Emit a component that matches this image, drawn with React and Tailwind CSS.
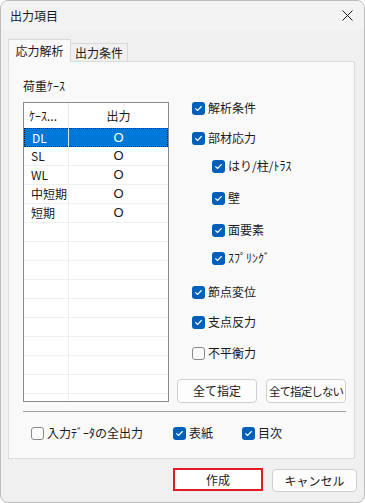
import React from "react";

const Check = ({ checked }) =>
  checked ? (
    <span className="flex h-[13px] w-[13px] shrink-0 items-center justify-center rounded-[3px] bg-[#005fb8]">
      <svg width="9" height="9" viewBox="0 0 9 9" fill="none">
        <path d="M1.6 4.7 L3.5 6.5 L7.4 2.5" stroke="#fff" strokeWidth="1.1" strokeLinecap="round" strokeLinejoin="round" />
      </svg>
    </span>
  ) : (
    <span className="h-[13px] w-[13px] shrink-0 rounded-[3px] border border-[#8a8a8a] bg-[#fbfbfb]" />
  );

const CheckRow = ({ label, checked = true, className = "" }) => (
  <div className={`flex h-[16px] items-center gap-[3px] ${className}`}>
    <Check checked={checked} />
    <span className="whitespace-nowrap leading-[16px]">{label}</span>
  </div>
);

// margins between rows taken from the screenshot
const options = [
  { label: "解析条件", cls: "ml-[15px]" },
  { label: "部材応力", cls: "ml-[15px] mt-[14px]" },
  { label: "はり/柱/ﾄﾗｽ", cls: "ml-[35px] mt-[12px]" },
  { label: "壁", cls: "ml-[35px] mt-[16px]" },
  { label: "面要素", cls: "ml-[35px] mt-[16px]" },
  { label: "ｽﾌﾟﾘﾝｸﾞ", cls: "ml-[35px] mt-[12px]" },
  { label: "節点変位", cls: "ml-[15px] mt-[18px]" },
  { label: "支点反力", cls: "ml-[15px] mt-[14px]" },
  { label: "不平衡力", cls: "ml-[15px] mt-[15px]", checked: false },
];

const loadCases = ["DL", "SL", "WL", "中短期", "短期"];

const App = () => {
  const emptyRows = Array.from({ length: 10 });

  return (
    <div className="h-[503px] w-[365px] overflow-hidden rounded-[8px] border border-[#bcbcbc] bg-[#f0f0f0] font-['Noto_Sans_CJK_JP',sans-serif] text-[12px] text-[#1a1a1a]">
      {/* title bar */}
      <div className="flex h-[29px] items-center justify-between bg-[#f3f3f3] pl-[9px] pr-[10px]">
        <span className="leading-[16px]">出力項目</span>
        <svg width="11" height="11" viewBox="0 0 11 11" className="mr-[1px]">
          <path d="M0.5 0.5 L10.5 10.5 M10.5 0.5 L0.5 10.5" stroke="#1a1a1a" strokeWidth="1" />
        </svg>
      </div>

      {/* tabs */}
      <div className="flex h-[31px] items-end pl-[7px]">
        <div className="relative z-10 -mb-px flex h-[23px] w-[63px] items-start justify-center border border-b-0 border-[#d9d9d9] bg-[#f9f9f9] pt-[3px]">
          <span className="leading-[16px]">応力解析</span>
        </div>
        <div className="flex h-[18px] w-[57px] items-start justify-center border border-b-0 border-l-0 border-[#d9d9d9] bg-[#f0f0f0] pt-[1px]">
          <span className="leading-[16px]">出力条件</span>
        </div>
      </div>

      {/* tab panel */}
      <div className="ml-[7px] flex h-[398px] w-[347px] flex-col border border-[#dcdcdc] bg-[#f9f9f9] pl-[14px] pr-[8px] pt-[16px]">
        <div className="flex">
          <div className="flex flex-col">
            <div className="h-[16px] leading-[16px]">荷重ｹｰｽ</div>
            <div className="mt-[8px] flex h-[300px] w-[146px] flex-col overflow-hidden border border-[#868a91] bg-white">
              <div className="flex h-[25px] shrink-0">
                <div className="flex w-[45px] items-center border-r border-[#e8e8e8] pl-[5px]">ｹｰｽ...</div>
                <div className="flex flex-1 items-center justify-center">出力</div>
              </div>
              {loadCases.map((name, i) => (
                <div
                  key={name}
                  className={
                    i === 0
                      ? "flex h-[19px] shrink-0 bg-[#0078d7] text-white outline-1 -outline-offset-1 outline-dotted outline-[#1a1a1a]"
                      : "flex h-[19px] shrink-0 border-b border-[#f0f0f0]"
                  }
                >
                  <div className={i === 0 ? "flex w-[45px] items-center border-r border-[#d6e6f5] pl-[8px]" : "flex w-[45px] items-center border-r border-[#f0f0f0] pl-[7px]"}>
                    {name}
                  </div>
                  <div className="flex flex-1 items-center justify-center font-['Liberation_Sans',sans-serif] text-[13px]">O</div>
                </div>
              ))}
              {emptyRows.map((_, i) => (
                <div key={i} className="flex h-[19px] shrink-0 border-b border-[#f0f0f0]">
                  <div className="w-[45px] border-r border-[#f0f0f0]" />
                </div>
              ))}
            </div>
          </div>

          <div className="ml-[8px] flex w-[169px] flex-col pt-[22px]">
            {options.map((o) => (
              <CheckRow key={o.label} label={o.label} checked={o.checked !== false} className={o.cls} />
            ))}
            <div className="mt-[18px] flex gap-[9px]">
              <button className="h-[24px] w-[80px] whitespace-nowrap rounded-[4px] border border-[#d0d0d0] bg-[#fdfdfd] leading-[16px]">全て指定</button>
              <button className="h-[24px] w-[80px] whitespace-nowrap rounded-[4px] border border-[#d0d0d0] bg-[#fdfdfd] px-0 text-[11.5px] leading-[16px] tracking-[-0.9px]">全て指定しない</button>
            </div>
          </div>
        </div>

        <div className="mt-[8px] border-t border-[#a0a0a0]" />

        <div className="mt-[13px] flex pl-[8px]">
          <CheckRow label="入力ﾃﾞｰﾀの全出力" checked={false} className="w-[142px]" />
          <CheckRow label="表紙" className="w-[69px]" />
          <CheckRow label="目次" />
        </div>
      </div>

      {/* dialog buttons */}
      <div className="mt-[9px] flex pl-[172px]">
        <div className="h-[23px] w-[90px] border-2 border-[#e31b23] bg-white">
          <button className="h-full w-full leading-[16px]">作成</button>
        </div>
        <button className="ml-[9px] mt-[1px] h-[23px] w-[85px] rounded-[4px] border border-[#d0d0d0] bg-[#fdfdfd] leading-[16px]">
          キャンセル
        </button>
      </div>
    </div>
  );
};

export default App;
